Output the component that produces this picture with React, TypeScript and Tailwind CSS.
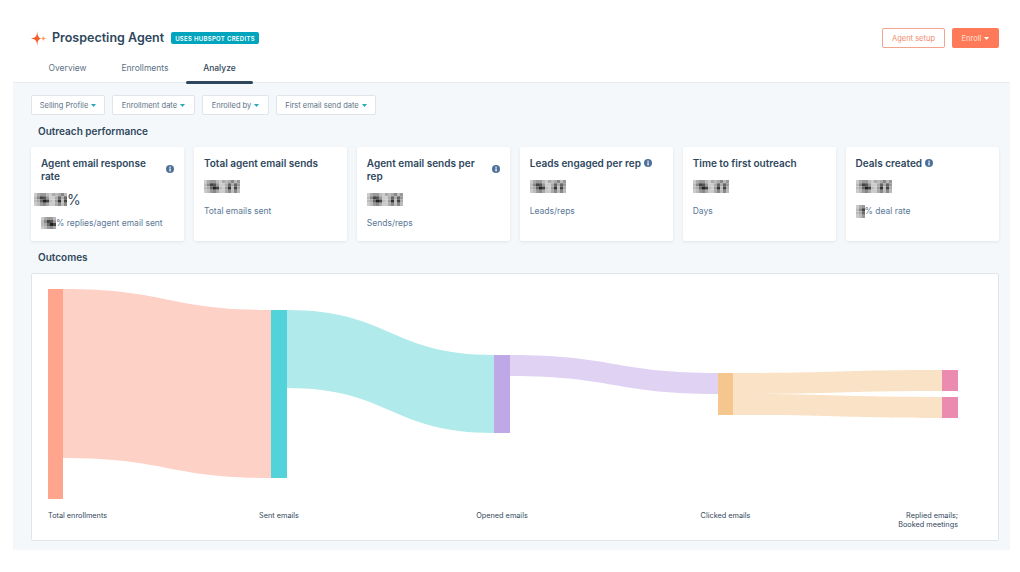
const tabs = [
  { label: 'Overview', cls: 'w-[73px]' },
  { label: 'Enrollments', cls: 'w-[82px]' },
  { label: 'Analyze', cls: 'w-[67px]', active: true },
]

const filters = [
  { label: 'Selling Profile', cls: 'w-[74px]' },
  { label: 'Enrollment date', cls: 'w-[83px]' },
  { label: 'Enrolled by', cls: 'w-[67px]' },
  { label: 'First email send date', cls: 'w-[100px]' },
]

const mosaic = [
  'ccc aaa 999 999 bbb ccc aaa bbb aaa 888 bbb 999'.split(' '),
  'bbb 888 444 555 999 ccc ccc aaa 666 aaa 666 999'.split(' '),
  'bbb aaa 666 222 444 bbb ccc 999 333 bbb 444 aaa'.split(' '),
  'ccc bbb 999 888 aaa ccc ccc aaa 888 bbb 888 bbb'.split(' '),
]

function Mosaic({ cols = 12, className = '' }: { cols?: number; className?: string }) {
  return (
    <svg width={cols * 3} height={13} viewBox={`0 0 ${cols * 3} 12`} preserveAspectRatio="none" className={`shrink-0 blur-[0.5px] ${className}`}>
      {mosaic.map((row, y) =>
        row.slice(0, cols).map((c, x) => <rect key={`${x}-${y}`} x={x * 3} y={y * 3} width={3} height={3} fill={`#${c}`} />),
      )}
    </svg>
  )
}

function Caret({ color = '#2aa7b8' }: { color?: string }) {
  return (
    <svg width="5" height="3" viewBox="0 0 5 3" className="shrink-0">
      <path d="M0 0h5L2.5 3z" fill={color} />
    </svg>
  )
}

function Info() {
  return (
    <svg width="8" height="8" viewBox="0 0 8 8" className="shrink-0">
      <circle cx="4" cy="4" r="4" fill="#4f7199" />
      <rect x="3.4" y="3.4" width="1.3" height="3" fill="#fff" />
      <rect x="3.4" y="1.6" width="1.3" height="1.2" fill="#fff" />
    </svg>
  )
}

function Card({ title, info, sub, tall, children }: { title: string; info?: 'side' | 'inline'; sub: React.ReactNode; tall?: boolean; children?: React.ReactNode }) {
  return (
    <div className="h-[94px] rounded-[2px] bg-white px-[10px] pt-[10px] shadow-[0_1px_3px_rgba(45,62,80,0.1)]">
      <div className="flex items-start justify-between text-[10px] leading-[12.5px] font-semibold text-[#2e475d]">
        <span className={info === 'inline' ? 'flex items-center gap-[3px]' : tall ? 'w-[118px]' : ''}>
          {title}
          {info === 'inline' && <Info />}
        </span>
        {info === 'side' && <span className="mt-[8px]"><Info /></span>}
      </div>
      <div className="mt-[10px] flex h-[14px] items-center">{children ?? <Mosaic />}</div>
      <div className="mt-[11px] flex items-center text-[8.5px] leading-[12px] text-[#5a7896]">{sub}</div>
    </div>
  )
}

function Sankey() {
  return (
    <svg viewBox="0 0 966 266" className="block h-[266px] w-[966px]">
      <path d="M31 15C135 15 135 36 239 36V204C135 204 135 184 31 184Z" fill="#fed1c6" />
      <path d="M255 36C358 36 358 81 462 81V159C358 159 358 114 255 114Z" fill="#b0eaea" />
      <path d="M478 81C582 81 582 99 686 99V120C582 120 582 102 478 102Z" fill="#dfd2f3" />
      <path d="M701 99C805 99 805 96 910 96V117C805 117 805 120 701 120Z" fill="#fae2c6" />
      <path d="M701 120C805 120 805 123 910 123V144C805 144 805 141 701 141Z" fill="#fae2c6" />
      <rect x="16" y="15" width="15" height="210" fill="#ffa58d" />
      <rect x="239" y="36" width="16" height="168" fill="#51d3d9" />
      <rect x="462" y="81" width="16" height="78" fill="#bea8e6" />
      <rect x="686" y="99" width="15" height="42" fill="#f5c78e" />
      <rect x="910" y="96" width="16" height="21" fill="#ec8bb0" />
      <rect x="910" y="123" width="16" height="21" fill="#ec8bb0" />
      <g fontSize="7.3" fill="#33475b" fontFamily="Inter, sans-serif">
        <text x="16" y="244">Total enrollments</text>
        <text x="247" y="244" textAnchor="middle">Sent emails</text>
        <text x="470" y="244" textAnchor="middle">Opened emails</text>
        <text x="693.5" y="244" textAnchor="middle">Clicked emails</text>
        <text x="926" y="244" textAnchor="end">Replied emails;</text>
        <text x="926" y="253" textAnchor="end">Booked meetings</text>
      </g>
    </svg>
  )
}

export default function App() {
  return (
    <div className="h-[572px] w-[1020px] overflow-hidden bg-white font-['Inter',sans-serif]">
      <header className="flex h-[55px] items-start justify-between pt-[28px] pr-[21px] pl-[31px]">
        <div className="flex h-[20px] items-center">
          <svg width="16" height="17" viewBox="0 0 16 17">
            <path d="M6.2 0.5C6.4 6 7.4 7.8 10.5 8.5C7.4 9.2 6.4 11 6.2 16.5C6 11 5 9.4 0 8.5C5 7.6 6 6 6.2 0.5Z" fill="#f2622e" />
            <path d="M12.3 5.5C12.5 7.4 13.2 8.1 16 8.5C13.2 8.9 12.5 9.6 12.3 11.5C12.1 9.6 11.4 8.9 9.5 8.5C11.4 8.1 12.1 7.4 12.3 5.5Z" fill="#f7a26f" />
          </svg>
          <h1 className="ml-[5px] w-[112px] text-[12.5px] font-semibold whitespace-nowrap text-[#2e475d]">Prospecting Agent</h1>
          <span className="ml-[7px] flex h-[12px] w-[88px] items-center justify-center rounded-[2px] bg-[#00a4bd] text-[6px] font-semibold tracking-[0.3px] whitespace-nowrap text-white">
            USES HUBSPOT CREDITS
          </span>
        </div>
        <div className="flex gap-[7px]">
          <button className="h-[20px] w-[63px] rounded-[2px] border border-[#f2a58e] bg-white pt-[1px] text-[7.5px] text-[#ef8a6c]">Agent setup</button>
          <button className="flex h-[20px] w-[47px] items-center justify-center gap-[3px] rounded-[2px] bg-[#ff7a59] pt-[1px] text-[7.5px] text-[#ffe3da]">
            Enroll <Caret color="#fff" />
          </button>
        </div>
      </header>

      <nav className="flex h-[27px] pl-[31px]">
        {tabs.map((t) => (
          <div key={t.label} className={`${t.cls} relative flex h-[27px] justify-center pt-[7px] text-[8.5px] leading-[12px] ${t.active ? 'font-medium text-[#33475b]' : 'text-[#5c7285]'}`}>
            {t.label}
            {t.active && <span className="absolute inset-x-0 bottom-[-2px] h-[3px] rounded-[2px] bg-[#2e475d]" />}
          </div>
        ))}
      </nav>

      <main className="mr-[10px] ml-[13px] h-[468px] border-t border-[#e6ecf1] bg-[#f5f8fa] pt-[12px] pr-[11px] pl-[18px]">
        <div className="flex gap-[7px]">
          {filters.map((f) => (
            <button key={f.label} className={`${f.cls} flex h-[20px] items-center justify-center gap-[3px] rounded-[2px] border border-[#dfe5eb] bg-white pt-[1px] text-[7.5px] text-[#5c7285]`}>
              {f.label} <Caret />
            </button>
          ))}
        </div>
        <h2 className="mt-[9px] pl-[7px] text-[10px] leading-[14px] font-semibold text-[#2e475d]">Outreach performance</h2>
        <div className="mt-[9px] grid grid-cols-6 gap-[9.5px]">
          <Card title="Agent email response rate" info="side" tall sub={<><Mosaic cols={5} className="h-[12px]" />% replies/agent email sent</>}>
            <span className="-ml-[7px] flex items-center text-[14px] text-[#33475b]"><Mosaic cols={11} />%</span>
          </Card>
          <Card title="Total agent email sends" sub="Total emails sent" />
          <Card title="Agent email sends per rep" info="side" tall sub="Sends/reps" />
          <Card title="Leads engaged per rep" info="inline" sub="Leads/reps" />
          <Card title="Time to first outreach" sub="Days" />
          <Card title="Deals created" info="inline" sub={<><Mosaic cols={3} />% deal rate</>} />
        </div>
        <h2 className="mt-[9px] pl-[7px] text-[10px] leading-[14px] font-semibold text-[#2e475d]">Outcomes</h2>
        <div className="mt-[9px] h-[268px] w-[968px] rounded-[2px] border border-[#dfe5eb] bg-white">
          <Sankey />
        </div>
      </main>
    </div>
  )
}
